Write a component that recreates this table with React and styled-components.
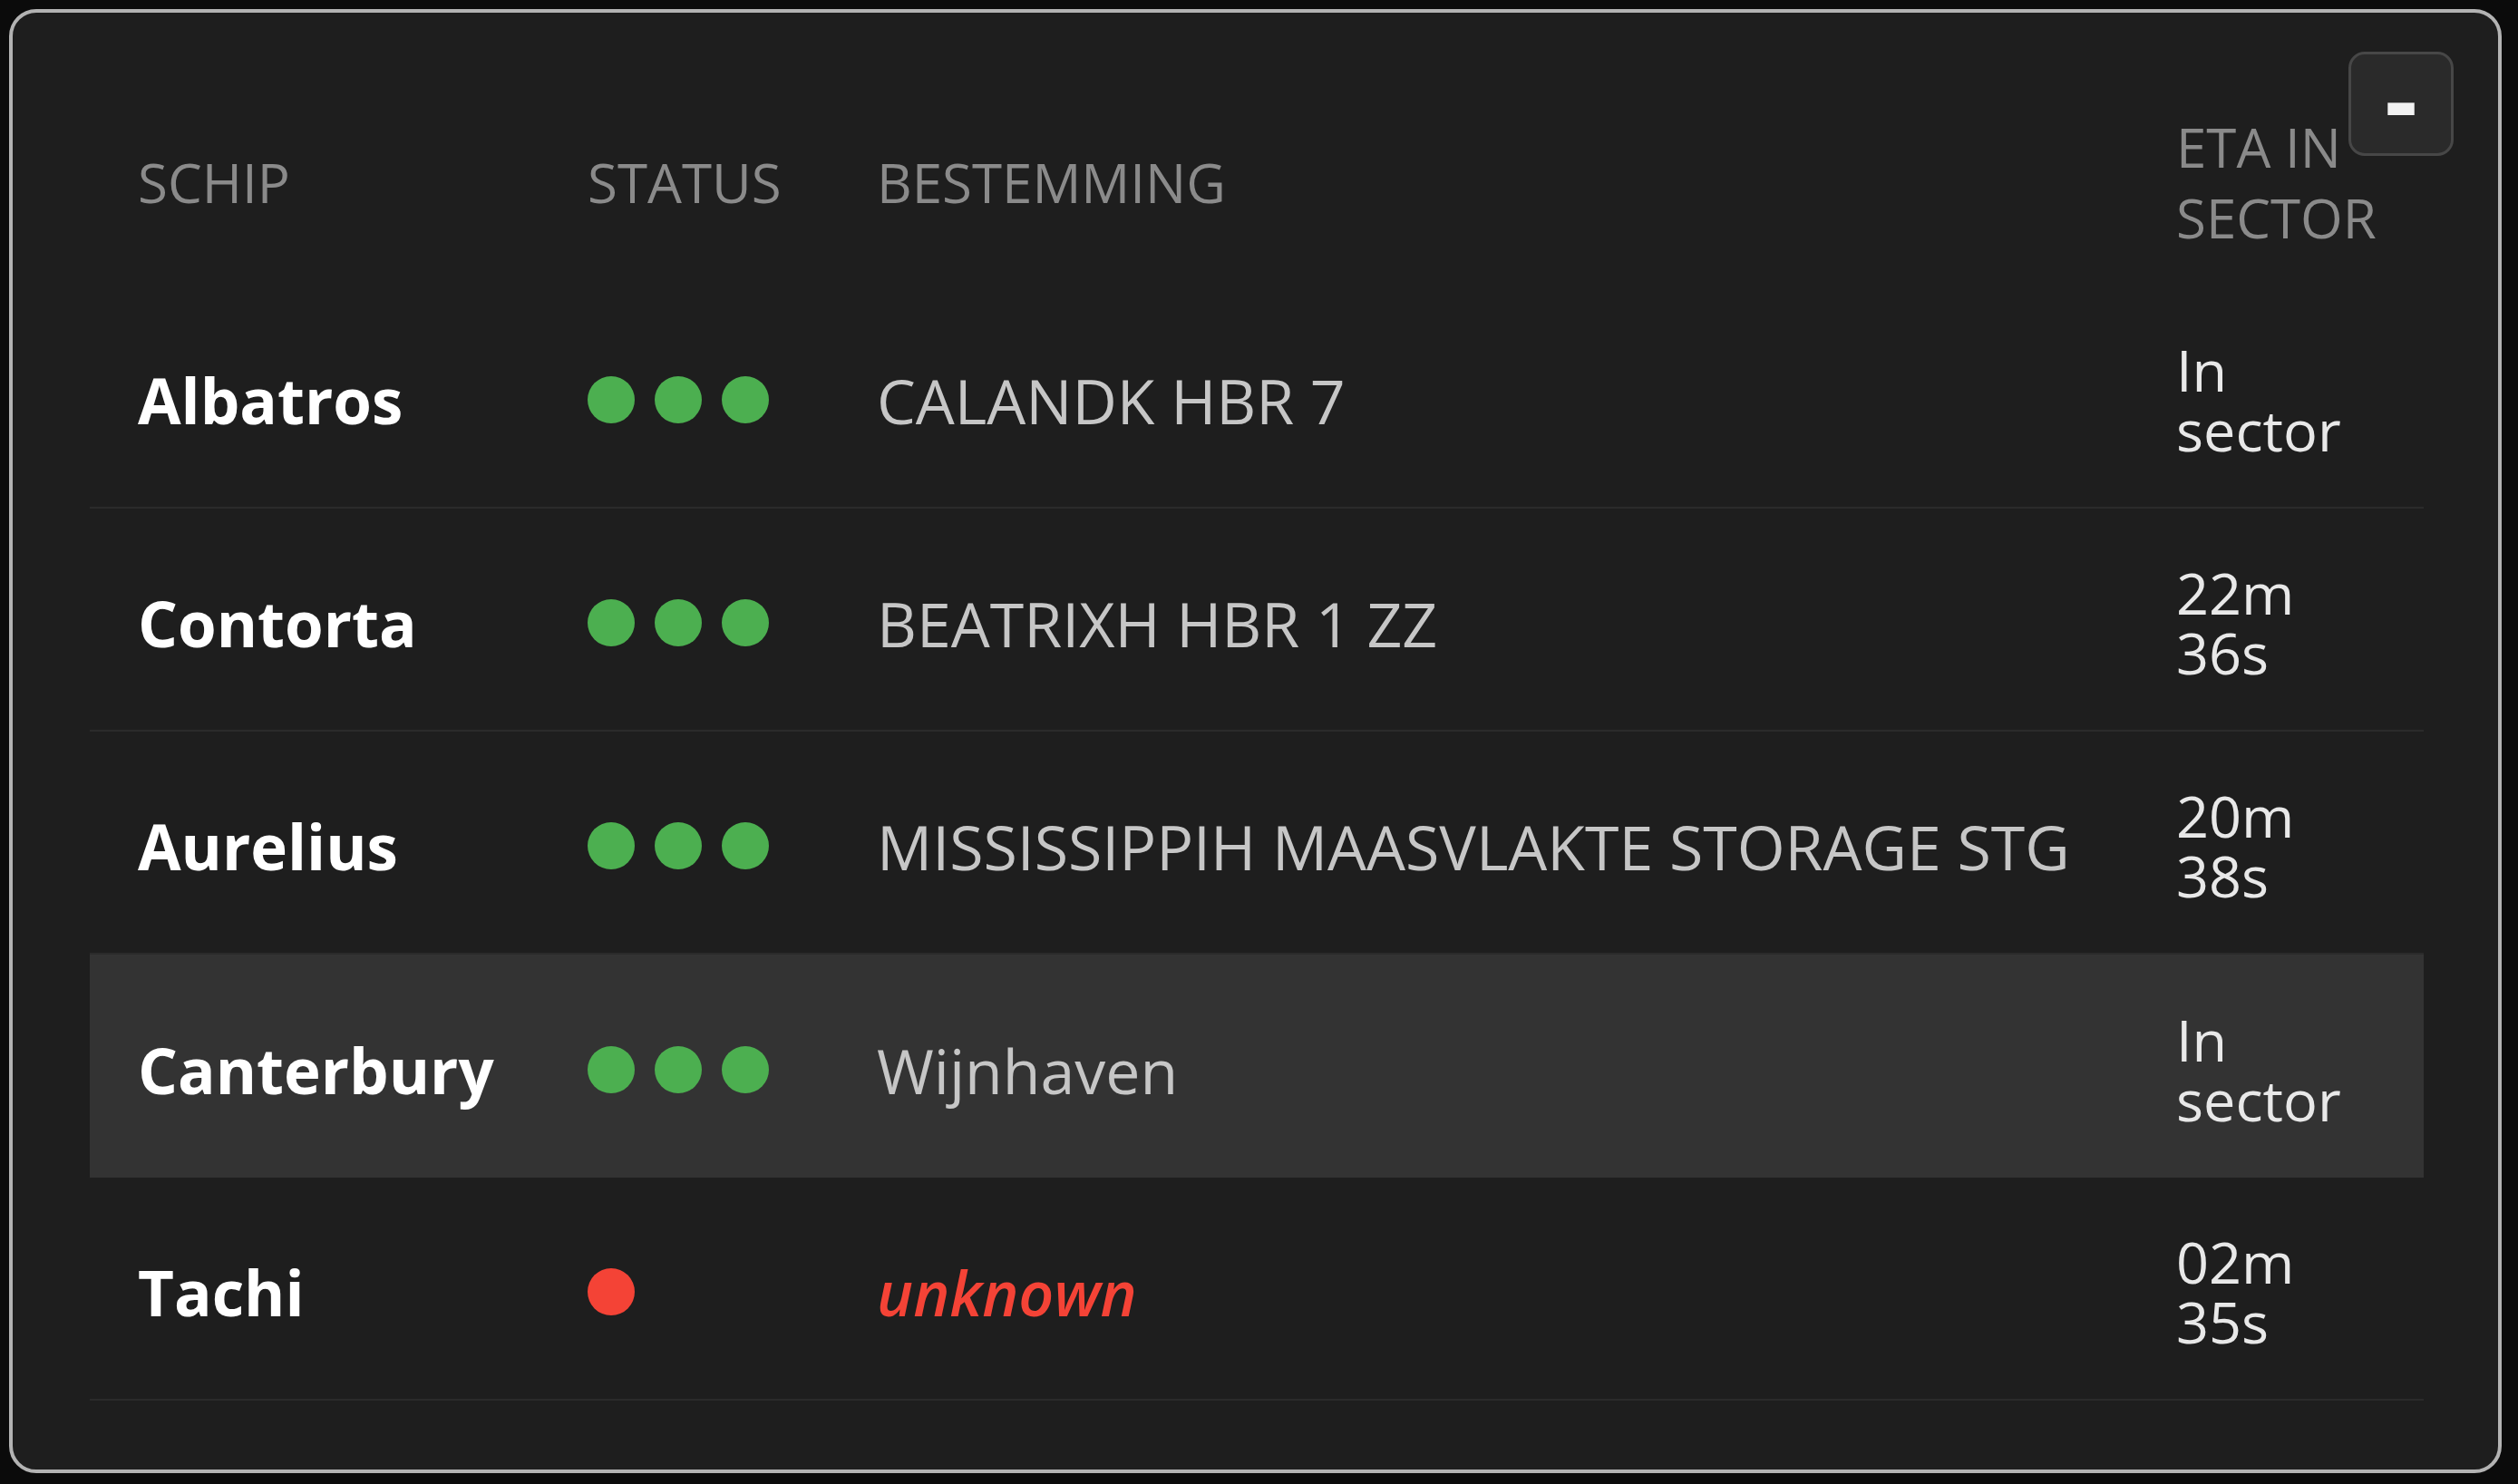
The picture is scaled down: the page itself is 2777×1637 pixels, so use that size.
import React from "react";
import styled, {createGlobalStyle} from "styled-components";

const GlobalStyle = createGlobalStyle`
  html, body {
    margin: 0;
    padding: 0;
    background: #0b0b0b;
  }
  body {
    font-family: "Open Sans", "Noto Sans", sans-serif;
  }
`;

const Page = styled.div`
  width: 2777px;
  height: 1637px;
  box-sizing: border-box;
  padding: 10px 18px 12px 10px;
  display: flex;
`;

const Panel = styled.div`
  position: relative;
  flex: 1;
  box-sizing: border-box;
  padding: 72px 82px 73px 85px;
  background: #1e1e1e;
  border: 4px solid #b3b3b3;
  border-radius: 30px;
  display: flex;
  flex-direction: column;
`;

const MinimizeButton = styled.button`
  position: absolute;
  top: 43px;
  right: 49px;
  width: 116px;
  height: 115px;
  box-sizing: border-box;
  padding: 0 0 16px;
  border: 3px solid #474747;
  border-radius: 18px;
  background: #2a2a2a;
  color: #f2f2f2;
  font-family: "Open Sans", sans-serif;
  font-size: 112px;
  font-weight: 700;
  line-height: 1;
  display: flex;
  align-items: center;
  justify-content: center;
  cursor: pointer;
`;

const Row = styled.div`
  display: grid;
  grid-template-columns: 496px 319px 1fr 220px;
  align-items: center;
  box-sizing: border-box;
  padding: ${props => props.header ? '0 53px' : '8px 53px 0'};
  height: ${props => props.header ? 229 : 246}px;
  background: ${props => props.highlighted ? '#333333' : 'transparent'};
  border-bottom: ${props => props.header || props.highlighted ? 'none' : '2px solid #2b2b2b'};
`;

const HeadCell = styled.div`
  font-size: 60px;
  font-weight: 500;
  line-height: 78px;
  color: #8a8a8a;
  text-transform: uppercase;
`;

const ShipName = styled.div`
  font-size: 69px;
  font-weight: 700;
  color: #ffffff;
  white-space: nowrap;
`;

const Dots = styled.div`
  display: flex;
  gap: 22px;
`;

const Dot = styled.span`
  width: 52px;
  height: 52px;
  border-radius: 50%;
  background: ${props => props.error ? '#f44336' : '#4caf50'};
`;

const Destination = styled.div`
  font-size: 68px;
  color: ${props => props.unknown ? '#f44336' : '#c6c6c6'};
  font-style: ${props => props.unknown ? 'italic' : 'normal'};
  font-weight: ${props => props.unknown ? 600 : 450};
  white-space: nowrap;
`;

const Eta = styled.div`
  font-size: 63px;
  line-height: 66px;
  color: #e8e8e8;
`;

const ships = [
    {name: 'Albatros', ok: true, destination: 'CALANDK HBR 7', eta: 'In sector'},
    {name: 'Contorta', ok: true, destination: 'BEATRIXH HBR 1 ZZ', eta: '22m 36s'},
    {name: 'Aurelius', ok: true, destination: 'MISSISSIPPIH MAASVLAKTE STORAGE STG', eta: '20m 38s'},
    {name: 'Canterbury', ok: true, destination: 'Wijnhaven', eta: 'In sector', highlighted: true},
    {name: 'Tachi', ok: false, destination: null, eta: '02m 35s'},
];

const App = () => (
    <Page>
        <GlobalStyle/>
        <Panel>
            <MinimizeButton>-</MinimizeButton>
            <Row header>
                <HeadCell>Schip</HeadCell>
                <HeadCell>Status</HeadCell>
                <HeadCell>Bestemming</HeadCell>
                <HeadCell>ETA in sector</HeadCell>
            </Row>
            {ships.map(ship => (
                <Row key={ship.name} highlighted={ship.highlighted}>
                    <ShipName>{ship.name}</ShipName>
                    <Dots>
                        {ship.ok
                            ? [0, 1, 2].map(i => <Dot key={i}/>)
                            : <Dot error/>}
                    </Dots>
                    {ship.destination
                        ? <Destination>{ship.destination}</Destination>
                        : <Destination unknown>unknown</Destination>}
                    <Eta>{ship.eta}</Eta>
                </Row>
            ))}
        </Panel>
    </Page>
);

export default App;
